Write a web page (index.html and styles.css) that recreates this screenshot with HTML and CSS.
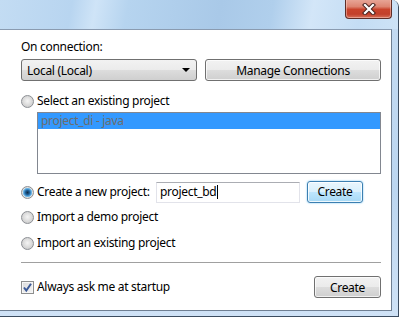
FILE: index.html
```html
<!DOCTYPE html>
<html lang="en">
<head>
    <meta charset="UTF-8">
    <title>Select Project</title>
    <link rel="stylesheet" href="styles.css">
</head>
<body>
    <div class="window">
        <div class="titlebar">
            <div class="close">
                <svg width="14" height="12" viewBox="0 0 14 12">
                    <path d="M3 2 L11 10 M11 2 L3 10" stroke="#4a2420" stroke-width="4.2" stroke-linecap="square"/>
                    <path d="M3 2 L11 10 M11 2 L3 10" stroke="#ffffff" stroke-width="2.2" stroke-linecap="square"/>
                </svg>
            </div>
        </div>

        <div class="client">
            <div class="label">On connection:</div>
            <div class="conn-row">
                <div class="combo">
                    <span>Local (Local)</span>
                    <span class="arrow"></span>
                </div>
                <div class="btn">Manage Connections</div>
            </div>

            <div class="option select-row"><span class="radio"></span>Select an existing project</div>
            <div class="list">
                <div class="list-item selected">project_di - java</div>
            </div>

            <div class="option new-row">
                <span class="radio checked"></span>
                <span class="new-label">Create a new project:</span>
                <div class="textbox">project_bd<span class="caret"></span></div>
                <div class="btn default">Create</div>
            </div>

            <div class="option demo-row"><span class="radio"></span>Import a demo project</div>
            <div class="option import-row"><span class="radio"></span>Import an existing project</div>

            <div class="separator"></div>

            <div class="footer">
                <div class="option">
                    <span class="checkbox">
                        <svg width="11" height="11" viewBox="0 0 11 11">
                            <path d="M2 5.5 L4.3 8.5 L9 1.8" fill="none" stroke="#3c5a98" stroke-width="2"/>
                        </svg>
                    </span>
                    Always ask me at startup
                </div>
                <div class="btn footer-btn">Create</div>
            </div>
        </div>
    </div>
</body>
</html>
```

FILE: styles.css
```css
body, html {
    margin: 0;
    padding: 0;
    background: #ffffff;
    font-family: 'Noto Sans', 'Open Sans', sans-serif;
    font-size: 12px;
    letter-spacing: -0.3px;
    color: #000;
}

.window {
    width: 398px;
    height: 316px;
    border-right: 1px solid #3b4c60;
    border-bottom: 1px solid #3b4c60;
    border-top-right-radius: 7px;
    background: linear-gradient(180deg, #c4dbf2 0%, #bcd6f0 60%, #cfe2f6 100%);
    display: flex;
    flex-direction: column;
    overflow: hidden;
}

.titlebar {
    height: 29px;
    flex: none;
    position: relative;
    background: linear-gradient(100deg, #c3dcf3 0%, #b8d5f0 18%, #cfe4f7 24%, #b6d4ef 32%, #a9c9e8 55%, #b0cfec 68%, #d3e6f8 78%, #c4ddf4 90%, #cde2f6 100%);
}

.close {
    position: absolute;
    top: -1px;
    right: 6px;
    width: 45px;
    height: 19px;
    border: 1px solid #5e2d27;
    border-top: none;
    border-radius: 0 0 4px 4px;
    background: linear-gradient(180deg, #e9a99b 0%, #dd8572 40%, #c9432c 55%, #c2402b 80%, #d7715a 100%);
    box-shadow: inset 0 0 0 1px rgba(255, 220, 210, 0.45);
    display: flex;
    align-items: center;
    justify-content: center;
}

.client {
    height: 280px;
    margin-right: 6px;
    margin-bottom: 5px;
    background: #ffffff;
    border-top: 1px solid #8a9bb0;
    border-right: 1px solid #6f7f92;
    border-bottom: 1px solid #6f7f92;
    padding: 9px 10px 0 21px;
    display: flex;
    flex-direction: column;
}

.label {
    line-height: 16px;
}

.conn-row {
    display: flex;
    gap: 8px;
    margin-top: 4px;
    height: 22px;
}

.combo {
    width: 176px;
    box-sizing: border-box;
    border: 1px solid #707070;
    border-radius: 3px;
    background: linear-gradient(180deg, #f2f2f2 0%, #ebebeb 50%, #dddddd 51%, #cfcfcf 100%);
    display: flex;
    align-items: center;
    justify-content: space-between;
    padding: 0 4px 0 5px;
}

.arrow {
    width: 0;
    height: 0;
    border-left: 4px solid transparent;
    border-right: 4px solid transparent;
    border-top: 4px solid #000;
    margin-right: 2px;
}

.btn {
    box-sizing: border-box;
    border: 1px solid #707070;
    border-radius: 3px;
    background: linear-gradient(180deg, #f2f2f2 0%, #ebebeb 50%, #dddddd 51%, #cfcfcf 100%);
    box-shadow: inset 0 0 0 1px rgba(255, 255, 255, 0.7);
    display: flex;
    align-items: center;
    justify-content: center;
}

.conn-row .btn {
    width: 176px;
}

.option {
    display: flex;
    align-items: center;
    line-height: 16px;
    height: 16px;
}

.select-row {
    margin-top: 12px;
}

.radio {
    width: 13px;
    height: 13px;
    box-sizing: border-box;
    border-radius: 50%;
    border: 1px solid #8c8f94;
    background: radial-gradient(circle at 50% 45%, #f4f4f4 0, #e2e2e2 3px, #cfcfcf 6px);
    margin-right: 3px;
    flex: none;
}

.radio.checked {
    background: radial-gradient(circle at 50% 50%, #0f2c46 0, #1d5c93 2px, #4b9ad3 3.5px, #8cc7ec 4.5px, #e0e0e0 5px, #d0d0d0 6px);
}

.list {
    margin-top: 3px;
    margin-left: 16px;
    height: 62px;
    box-sizing: border-box;
    border: 1px solid #828790;
}

.list-item {
    height: 16px;
    line-height: 16px;
    padding-left: 3px;
    color: #6d6d6d;
}

.list-item.selected {
    background: #3399ff;
}

.new-row {
    height: 22px;
    margin-top: 7px;
}

.new-label {
    width: 119px;
}

.textbox {
    width: 144px;
    height: 21px;
    box-sizing: border-box;
    border: 1px solid #e2e3ea;
    border-top-color: #abadb3;
    padding-left: 3px;
    display: flex;
    align-items: center;
}

.caret {
    width: 1px;
    height: 14px;
    margin-left: 1px;
    background: #000;
}

.btn.default {
    width: 56px;
    height: 22px;
    margin-left: 7px;
    margin-top: -1px;
    border-color: #3c7fb1;
    background: linear-gradient(180deg, #eaf6fd 0%, #d9f0fc 50%, #bee6fd 51%, #a7d9f5 100%);
    box-shadow: inset 0 0 0 1px rgba(255, 255, 255, 0.8), 0 0 2px #73c3ef;
}

.demo-row {
    margin-top: 6px;
}

.import-row {
    margin-top: 10px;
}

.separator {
    margin-top: 11px;
    height: 1px;
    background: #a0a0a0;
}

.footer {
    margin-top: 13px;
    display: flex;
    align-items: center;
    justify-content: space-between;
}

.checkbox {
    width: 13px;
    height: 13px;
    box-sizing: border-box;
    border: 1px solid #8e8f8f;
    background: linear-gradient(135deg, #dcdcdc 0%, #f4f4f4 100%);
    box-shadow: inset 0 0 0 1px #f6f6f6;
    margin-right: 3px;
    display: flex;
    align-items: center;
    justify-content: center;
    flex: none;
}

.footer-btn {
    width: 67px;
    height: 22px;
}
```
